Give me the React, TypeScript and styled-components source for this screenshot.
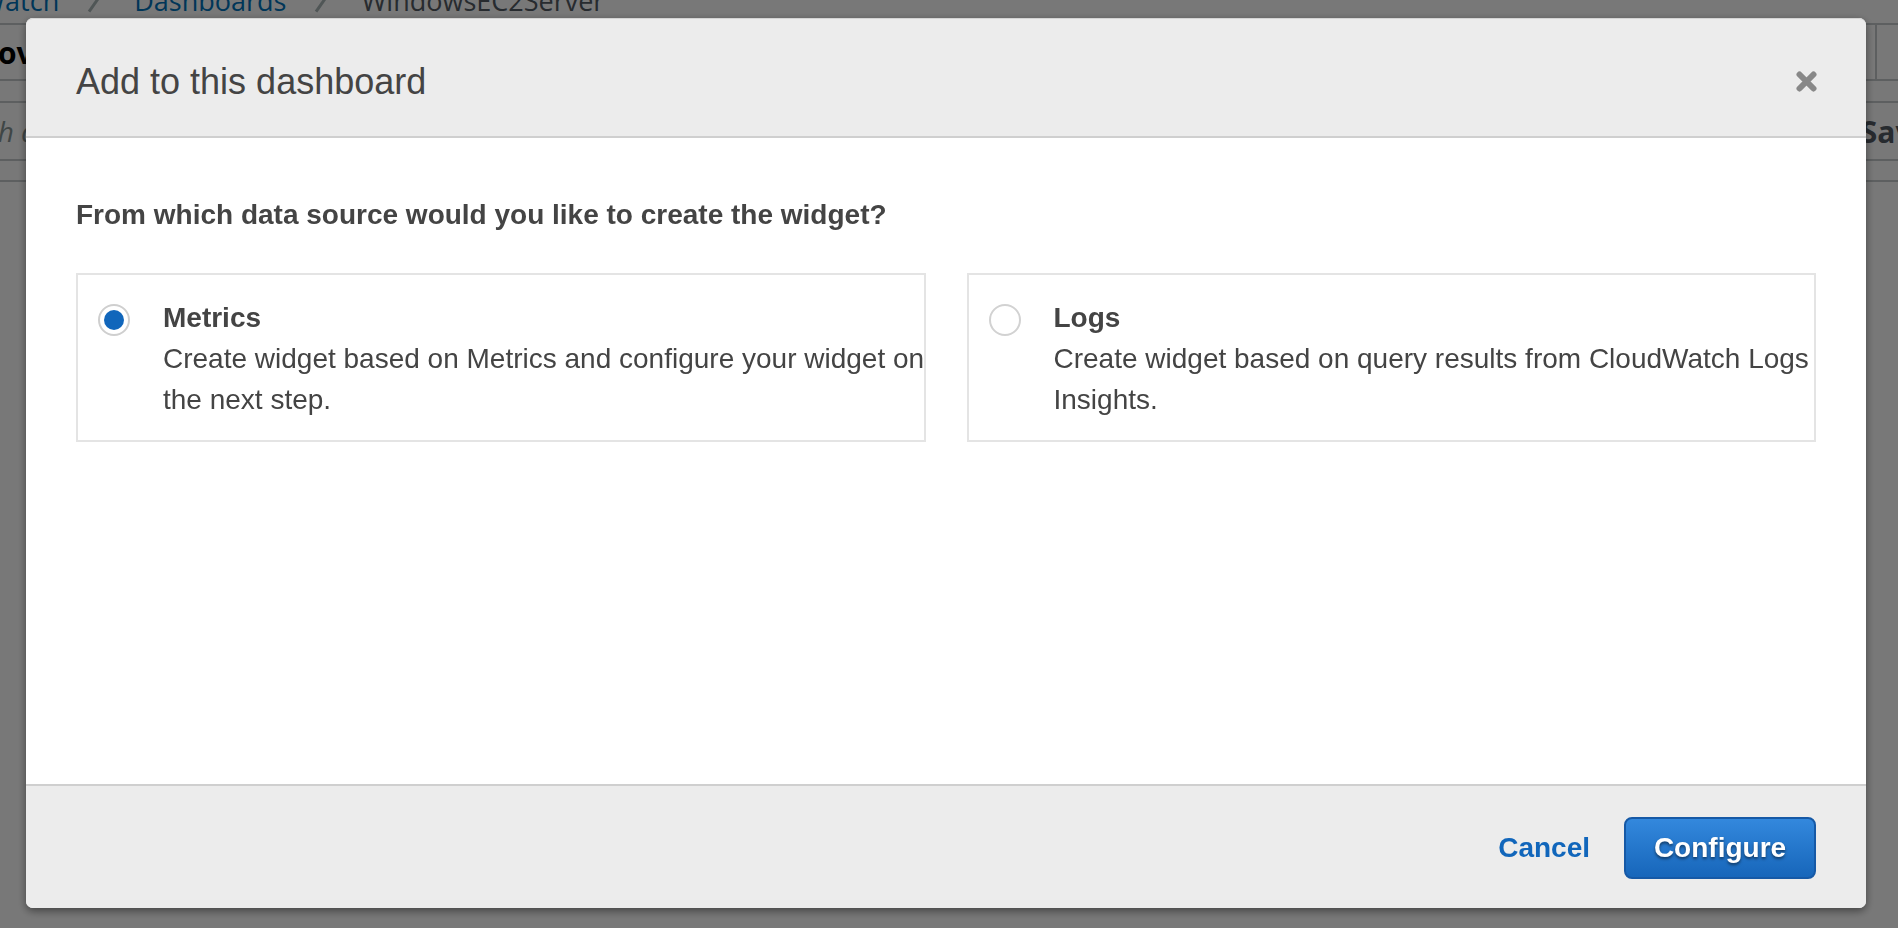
import styled, { createGlobalStyle } from "styled-components";

const GlobalStyle = createGlobalStyle`
  html, body {
    margin: 0;
    padding: 0;
    overflow: hidden;
    background: #ffffff;
  }
  * {
    box-sizing: border-box;
  }
`;

// page that sits under the dimmed overlay
const Page = styled.div`
  width: 1898px;
  height: 928px;
  overflow: hidden;
  background: #ffffff;
  font-family: "Open Sans", "Liberation Sans", sans-serif;
`;

const Breadcrumbs = styled.nav`
  display: flex;
  align-items: center;
  gap: 36px;
  height: 45px;
  margin-top: -22px;
  margin-left: -93px;
  font-size: 27px;
`;

const Crumb = styled.span<{ $current?: boolean }>`
  color: ${(p) => (p.$current ? "#545b64" : "#0073bb")};
`;

const Slash = styled.span`
  display: inline-block;
  width: 3px;
  height: 26px;
  background: #aab7b8;
  transform: rotate(35deg);
`;

const HeaderRow = styled.div`
  display: flex;
  justify-content: space-between;
  align-items: stretch;
  height: 58px;
  border-top: 2px solid #c6cbcd;
  border-bottom: 2px solid #c6cbcd;
`;

const PageTitle = styled.h1`
  margin: 0 0 0 -2px;
  display: flex;
  align-items: center;
  font-size: 30px;
  font-weight: 700;
  color: #000;
`;

const ToolGroup = styled.div`
  display: flex;
  width: 23px;
  border-left: 2px solid #c6cbcd;
`;

const Band = styled.div`
  height: 22px;
  border-bottom: 2px solid #c6cbcd;
`;

const SearchRow = styled.div`
  display: flex;
  justify-content: space-between;
  align-items: center;
  height: 58px;
  border-bottom: 2px solid #c6cbcd;
  overflow: hidden;
`;

const Placeholder = styled.span`
  margin-left: -70px;
  font-size: 28px;
  font-style: italic;
  color: #879596;
`;

const SaveLabel = styled.span`
  margin-right: -200px;
  font-size: 30px;
  font-weight: 700;
  color: #545b64;
`;

const ThinBand = styled.div`
  height: 21px;
  border-bottom: 2px solid #c6cbcd;
`;

const Overlay = styled.div`
  position: fixed;
  inset: 0;
  background: rgba(0, 0, 0, 0.53);
  display: flex;
  padding: 18px 32px 20px 26px;
`;

const Modal = styled.div`
  flex: 1;
  min-width: 0;
  display: flex;
  flex-direction: column;
  border-radius: 7px;
  background: #ffffff;
  box-shadow: 0 3px 8px rgba(0, 0, 0, 0.45);
  font-family: "Liberation Sans", Arial, sans-serif;
  color: #444444;
`;

const ModalHeader = styled.header`
  display: flex;
  align-items: center;
  justify-content: space-between;
  height: 120px;
  padding: 8px 49px 0 50px;
  background: #ececec;
  border-top: 1px solid #d4d4d4;
  border-bottom: 2px solid #cfcfcf;
  border-radius: 7px 7px 0 0;
`;

const ModalTitle = styled.h2`
  margin: 0;
  font-size: 36px;
  font-weight: 400;
  color: #444444;
`;

const CloseButton = styled.button`
  display: flex;
  padding: 0;
  border: none;
  background: none;
  cursor: pointer;
`;

const ModalBody = styled.section`
  flex: 1;
  padding: 57px 50px 0 50px;
`;

const Question = styled.p`
  margin: 0 0 38px 0;
  font-size: 28px;
  line-height: 40px;
  font-weight: 700;
  color: #444444;
`;

const Options = styled.div`
  display: grid;
  grid-template-columns: repeat(2, minmax(0, 1fr));
  gap: 41px;
`;

const OptionCard = styled.label`
  display: flex;
  align-items: flex-start;
  gap: 33px;
  height: 169px;
  min-width: 0;
  padding: 27px 0 0 20px;
  border: 2px solid #e4e4e4;
  cursor: pointer;
`;

const Radio = styled.span<{ $checked?: boolean }>`
  flex-shrink: 0;
  display: flex;
  align-items: center;
  justify-content: center;
  width: 32px;
  height: 32px;
  margin-top: 2px;
  border-radius: 50%;
  border: 2px solid ${(p) => (p.$checked ? "#cfcfcf" : "#d2d2d2")};
  background: #ffffff;

  &::after {
    content: "";
    display: ${(p) => (p.$checked ? "block" : "none")};
    width: 20px;
    height: 20px;
    border-radius: 50%;
    background: #1166bb;
  }
`;

const OptionText = styled.div`
  flex-shrink: 0;
  width: 790px;
  margin-top: -5px;
  font-size: 28px;
  line-height: 41px;
`;

const OptionName = styled.div`
  font-weight: 700;
`;

const OptionDesc = styled.div`
  font-weight: 400;
`;

const ModalFooter = styled.footer`
  display: flex;
  align-items: center;
  justify-content: flex-end;
  gap: 34px;
  height: 124px;
  padding: 2px 50px 0 50px;
  background: #ececec;
  border-top: 2px solid #cfcfcf;
  border-radius: 0 0 7px 7px;
`;

const LinkButton = styled.button`
  padding: 0;
  border: none;
  background: none;
  font-family: "Liberation Sans", Arial, sans-serif;
  font-size: 28px;
  font-weight: 700;
  color: #1166bb;
  cursor: pointer;
`;

const PrimaryButton = styled.button`
  width: 192px;
  height: 62px;
  border: 2px solid #1659a6;
  border-radius: 8px;
  background: linear-gradient(#3388dd, #1766ba);
  font-family: "Liberation Sans", Arial, sans-serif;
  font-size: 28px;
  font-weight: 700;
  color: #ffffff;
  text-shadow: 0 2px 3px rgba(0, 0, 0, 0.5);
  cursor: pointer;
`;

const options = [
  {
    id: "metrics",
    name: "Metrics",
    desc: "Create widget based on Metrics and configure your widget on the next step.",
    checked: true,
  },
  {
    id: "logs",
    name: "Logs",
    desc: "Create widget based on query results from CloudWatch Logs Insights.",
    checked: false,
  },
];

const App = () => {
  return (
    <>
      <GlobalStyle />
      <Page>
        <Breadcrumbs>
          <Crumb>CloudWatch</Crumb>
          <Slash />
          <Crumb>Dashboards</Crumb>
          <Slash />
          <Crumb $current>WindowsEC2Server</Crumb>
        </Breadcrumbs>
        <HeaderRow>
          <PageTitle>overview</PageTitle>
          <ToolGroup />
        </HeaderRow>
        <Band />
        <SearchRow>
          <Placeholder>Search dashboards</Placeholder>
          <SaveLabel>Save dashboard</SaveLabel>
        </SearchRow>
        <ThinBand />
      </Page>

      <Overlay>
        <Modal>
          <ModalHeader>
            <ModalTitle>Add to this dashboard</ModalTitle>
            <CloseButton aria-label="Close">
              <svg width="21" height="21" viewBox="0 0 21 21">
                <path
                  d="M3.5 3.5 L17.5 17.5 M17.5 3.5 L3.5 17.5"
                  stroke="#888888"
                  strokeWidth="6"
                  strokeLinecap="round"
                />
              </svg>
            </CloseButton>
          </ModalHeader>

          <ModalBody>
            <Question>From which data source would you like to create the widget?</Question>
            <Options>
              {options.map((opt) => (
                <OptionCard key={opt.id}>
                  <Radio $checked={opt.checked} />
                  <OptionText>
                    <OptionName>{opt.name}</OptionName>
                    <OptionDesc>{opt.desc}</OptionDesc>
                  </OptionText>
                </OptionCard>
              ))}
            </Options>
          </ModalBody>

          <ModalFooter>
            <LinkButton>Cancel</LinkButton>
            <PrimaryButton>Configure</PrimaryButton>
          </ModalFooter>
        </Modal>
      </Overlay>
    </>
  );
};

export default App;
